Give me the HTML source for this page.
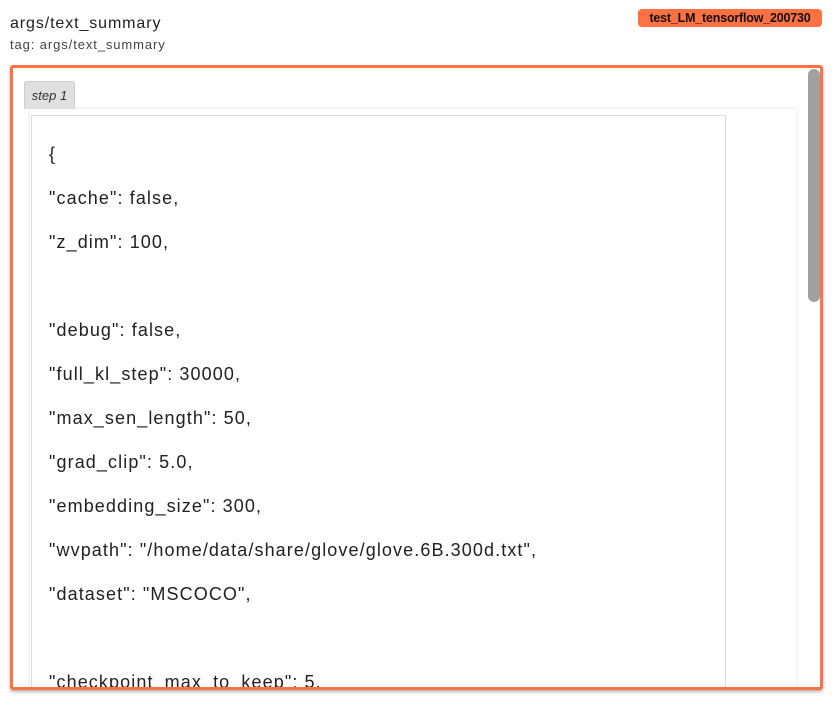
<!DOCTYPE html>
<html><head><style>
html,body{margin:0;width:832px;height:704px;overflow:hidden}
body{background:#fff;font-family:"Liberation Sans",sans-serif;position:relative}
.t1{position:absolute;left:10px;top:15px;font-size:16px;color:#212121;letter-spacing:0.9px}
.t2{position:absolute;left:10px;top:37px;font-size:13px;color:#424242;letter-spacing:0.9px}
.badge{position:absolute;left:638px;top:9px;width:184px;height:18px;background:#ff7043;border-radius:4px;font-size:12.5px;font-weight:bold;color:#111;text-align:center;line-height:18px;letter-spacing:-0.2px}
.box{position:absolute;left:10px;top:65px;width:807px;height:619px;border:3px solid #ff7043;border-radius:3px;overflow:hidden;box-shadow:0 2px 3px rgba(0,0,0,.3)}
.sb{position:absolute;right:0;top:1px;width:12px;height:233px;background:#a0a0a0;border-radius:6px}
.tab{position:absolute;left:11px;top:13px;width:49px;height:27px;background:#e0e0e0;border:1px solid #ccc;border-bottom:none;border-radius:3px 3px 0 0;font-style:italic;font-size:13px;color:#333;line-height:27px;text-align:center}
.card{position:absolute;left:17px;top:41px;width:766px;height:600px;background:#fff;box-shadow:0 0 3px rgba(0,0,0,.15)}
.pre{position:absolute;left:18px;top:47px;width:693px;height:600px;border:1px solid #ddd;background:#fff}
.l{position:absolute;left:36px;font-size:18px;color:#212121;white-space:pre;letter-spacing:1.1px}
</style></head><body>
<div class="t1">args/text_summary</div>
<div class="t2">tag: args/text_summary</div>
<div class="badge">test_LM_tensorflow_200730</div>
<div class="box">
<div class="card"></div>
<div class="pre"></div>
<div class="tab">step 1</div>
<div class="l" style="top:76px">{</div>
<div class="l" style="top:120px">"cache": false,</div>
<div class="l" style="top:164px">"z_dim": 100,</div>
<div class="l" style="top:252px">"debug": false,</div>
<div class="l" style="top:296px">"full_kl_step": 30000,</div>
<div class="l" style="top:340px">"max_sen_length": 50,</div>
<div class="l" style="top:384px">"grad_clip": 5.0,</div>
<div class="l" style="top:428px">"embedding_size": 300,</div>
<div class="l" style="top:472px">"wvpath": "/home/data/share/glove/glove.6B.300d.txt",</div>
<div class="l" style="top:516px">"dataset": "MSCOCO",</div>
<div class="l" style="top:604px">"checkpoint_max_to_keep": 5,</div>
<div class="sb"></div>
</div>
</body></html>
